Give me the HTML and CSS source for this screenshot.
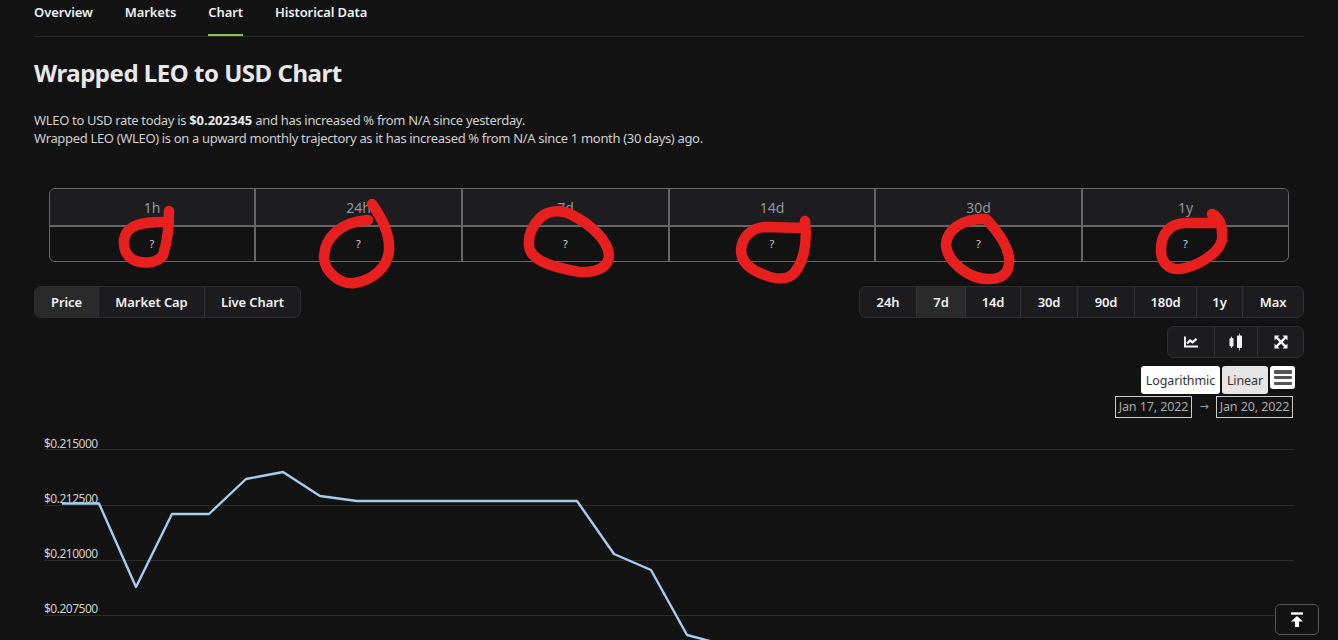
FILE: index.html
```html
<!DOCTYPE html>
<html lang="en">
<head>
<meta charset="utf-8">
<title>Wrapped LEO to USD Chart</title>
<link rel="stylesheet" href="styles.css">
</head>
<body>
<main class="page">
  <nav class="tabs">
    <a class="tab">Overview</a>
    <a class="tab">Markets</a>
    <a class="tab active">Chart</a>
    <a class="tab">Historical Data</a>
  </nav>
  <h1 class="title">Wrapped LEO to USD Chart</h1>
  <p class="intro">WLEO to USD rate today is <b>$0.202345</b> and has increased % from N/A since yesterday.<br>Wrapped LEO (WLEO) is on a upward monthly trajectory as it has increased % from N/A since 1 month (30 days) ago.</p>
  <div class="changes">
    <div class="head">1h</div><div class="head">24h</div><div class="head">7d</div><div class="head">14d</div><div class="head">30d</div><div class="head">1y</div>
    <div class="cell">?</div><div class="cell">?</div><div class="cell">?</div><div class="cell">?</div><div class="cell">?</div><div class="cell">?</div>
  </div>
  <div class="controls">
    <div class="group">
      <button class="btn on btn-price">Price</button><button class="btn btn-cap">Market Cap</button><button class="btn btn-live">Live Chart</button>
    </div>
    <div class="group">
      <button class="btn r1">24h</button><button class="btn on r2">7d</button><button class="btn r3">14d</button><button class="btn r4">30d</button><button class="btn r5">90d</button><button class="btn r6">180d</button><button class="btn r7">1y</button><button class="btn r8">Max</button>
    </div>
  </div>
  <div class="tools">
    <div class="group">
      <button class="btn icon-btn i1" aria-label="Line chart"><svg width="14" height="12" viewBox="0 0 14 12"><path d="M1 0.5V10.5H14" fill="none" stroke="#f2f2f2" stroke-width="2"/><path d="M3 7.5L6 4.5L8.5 6.3L12.5 2.8" fill="none" stroke="#f2f2f2" stroke-width="2.4"/></svg></button><button class="btn icon-btn i2" aria-label="Candlestick chart"><svg width="14" height="18" viewBox="0 0 14 18"><path d="M2.5 3.5V15M10.5 0.5V17.5" stroke="#bbb" stroke-width="1"/><rect x="0.5" y="5" width="4" height="8.5" rx="1" fill="#f2f2f2"/><rect x="8" y="2.5" width="5" height="12.5" rx="1" fill="#f2f2f2"/></svg></button><button class="btn icon-btn i3" aria-label="Full screen"><svg width="14" height="14" viewBox="0 0 14 14"><path d="M0.5 0.5H5.5L3.8 2.2L7 5.2L10.2 2.2L8.5 0.5H13.5V5.5L11.8 3.8L8.8 7L11.8 10.2L13.5 8.5V13.5H8.5L10.2 11.8L7 8.8L3.8 11.8L5.5 13.5H0.5V8.5L2.2 10.2L5.2 7L2.2 3.8L0.5 5.5Z" fill="#f5f5f5"/></svg></button>
    </div>
  </div>
  <div class="scale">
    <button class="scale-btn log">Logarithmic</button>
    <button class="scale-btn lin">Linear</button>
    <button class="menu-btn" aria-label="Chart menu"><span></span><span></span><span></span></button>
  </div>
  <div class="dates">
    <span class="date">Jan 17, 2022</span><span class="arrow">→</span><span class="date">Jan 20, 2022</span>
  </div>
  <svg class="chart" viewBox="34 425 1270 215" width="1270" height="215">
    <g class="grid">
      <path d="M44 449.5H1294M44 505.5H1294M44 560.5H1294M44 615.5H1294"/>
    </g>
    <g class="axis">
      <text x="44" y="448">$0.215000</text>
      <text x="44" y="503">$0.212500</text>
      <text x="44" y="558">$0.210000</text>
      <text x="44" y="613">$0.207500</text>
    </g>
    <polyline class="line" points="62,503.5 99,503.5 136,587 172,514 209,514 246,479 283,472 320,496 357,501 577,501 614,554 651,570 687,635 725,645"/>
  </svg>
</main>
<svg class="scribbles" width="1338" height="640" viewBox="0 0 1338 640" aria-hidden="true">
  <path d="M169 211C169 225 168 240 163 255C158 263 145 264 136 261C125 257 122 245 125 236C128 226 140 221 169 222"/>
  <path d="M372 204C382 218 390 235 389 250C388 268 372 280 355 283C340 285 325 272 324 258C324 238 340 222 368 220"/>
  <path d="M572 215C562 209 548 210 540 218C532 226 528 236 529 246C530 258 545 266 580 272C600 273 609 265 609 255C608 240 590 224 572 215Z"/>
  <path d="M805 221C807 240 806 258 795 272C788 281 775 279 765 275C750 270 741 262 741 250C742 238 750 228 765 227L805 228"/>
  <path d="M986 219C965 218 947 228 946 245C947 262 970 280 990 279C1005 279 1010 270 1009 258C1008 245 995 228 986 219Z"/>
  <path d="M1212 214C1220 218 1223 228 1222 240C1218 255 1195 267 1180 269C1168 270 1161 262 1161 250C1161 235 1168 224 1185 223L1215 223"/>
</svg>
<button class="to-top" aria-label="Back to top"><svg width="14" height="15" viewBox="0 0 14 15"><path d="M1 1.5H13" stroke="#fff" stroke-width="2.4"/><path d="M7 4L13 9.5H9V15H5V9.5H1Z" fill="#fff"/></svg></button>
</body>
</html>
```
FILE: styles.css
```css
* { box-sizing: border-box; }
html, body { margin: 0; height: 640px; overflow: hidden; background: #121212; }
body { font-family: "Noto Sans", "Open Sans", sans-serif; color: #e6e6e6; }
button { font-family: inherit; margin: 0; cursor: pointer; }

.page { padding: 0 34px; }

.tabs { display: flex; gap: 32px; height: 37px; border-bottom: 1px solid #2a2a2a; }
.tab { height: 36px; padding-top: 2px; font-size: 13px; line-height: 20px; font-weight: 600; letter-spacing: -0.1px; color: #f0f0f0; }
.tab.active { border-bottom: 2px solid #8dc351; }

.title { margin: 19px 0 0; font-size: 24px; line-height: 34px; font-weight: 700; letter-spacing: -0.48px; color: #e9e9e9; }

.intro { margin: 21px 0 0; font-size: 13px; line-height: 18px; letter-spacing: -0.33px; color: #cfcfcf; }
.intro b { color: #e9e9e9; letter-spacing: 0; }

.changes { display: grid; grid-template-columns: 206px 207px 207px 206px 207px 205px; margin: 41px 15px 0; height: 74px; border: 1px solid #666; border-radius: 6px; overflow: hidden; }
.head { height: 38px; background: #1d1d20; border-right: 2px solid #666; border-bottom: 2px solid #666; text-align: center; font-size: 14px; line-height: 37px; color: #8f939b; }
.cell { border-right: 2px solid #666; text-align: center; font-size: 11px; line-height: 34px; color: #d0d0d0; }
.head:nth-child(6), .cell:last-child { border-right: 0; }

.controls { display: flex; justify-content: space-between; margin-top: 24px; }
.group { display: flex; height: 32px; border: 1px solid #2e2e2e; border-radius: 7px; background: #1c1c1e; overflow: hidden; }
.btn { height: 30px; padding: 0; border: 0; border-left: 1px solid #333; background: transparent; color: #f2f2f2; font-size: 13px; font-weight: 600; letter-spacing: -0.1px; display: flex; align-items: center; justify-content: center; }
.btn:first-child { border-left: 0; }
.btn.on { background: #2a2a2b; }
.btn-price { width: 63px; }
.btn-cap { width: 106px; }
.btn-live { width: 96px; }
.r1 { width: 56px; } .r2 { width: 49px; } .r3 { width: 55px; } .r4 { width: 57px; }
.r5 { width: 57px; } .r6 { width: 62px; } .r7 { width: 46px; } .r8 { width: 61px; }

.tools { display: flex; justify-content: flex-end; margin-top: 8px; }
.icon-btn.i1 { width: 46px; } .icon-btn.i2 { width: 43px; } .icon-btn.i3 { width: 46px; }

.scale { display: flex; justify-content: flex-end; align-items: flex-start; gap: 2px; margin-top: 8px; padding-right: 9px; }
.scale-btn { height: 28px; padding: 0; border: 0; border-radius: 3px; color: #333; font-size: 12.5px; letter-spacing: -0.1px; }
.log { width: 79px; background: #fff; }
.lin { width: 46px; background: #e6e6e6; }
.menu-btn { width: 25px; height: 23px; padding: 4px 3.5px; border: 0; border-radius: 3px; background: #fff; display: flex; flex-direction: column; justify-content: space-between; }
.menu-btn span { display: block; height: 3.5px; background: #555; border-radius: 1px; }

.dates { display: flex; justify-content: flex-end; align-items: center; height: 22px; margin-top: 2px; padding-right: 11px; }
.date { width: 77px; height: 22px; border: 1px solid #ccc; font-size: 12.5px; line-height: 20px; text-align: center; letter-spacing: -0.1px; color: #a8a8a8; white-space: nowrap; }
.arrow { width: 24px; text-align: center; font-family: "DejaVu Sans", sans-serif; font-size: 11px; line-height: 20px; color: #9a9a9a; }

.chart { display: block; margin-top: 7px; }
.grid path { stroke: #2b2b2b; stroke-width: 1; fill: none; }
.axis text { font-family: "Noto Sans", sans-serif; font-size: 12px; letter-spacing: -0.5px; fill: #cfcfcf; }
.line { fill: none; stroke: #a6cdf0; stroke-width: 2.4; stroke-linejoin: round; }

.scribbles { position: absolute; top: 0; left: 0; pointer-events: none; }
.scribbles path { fill: none; stroke: #e81f1f; stroke-width: 10.5; stroke-linecap: round; stroke-linejoin: round; }

.to-top { position: fixed; left: 1275px; top: 604px; width: 44px; height: 31px; padding: 0; border: 1px solid #555; border-radius: 5px; background: #121212; display: flex; align-items: center; justify-content: center; }
```
